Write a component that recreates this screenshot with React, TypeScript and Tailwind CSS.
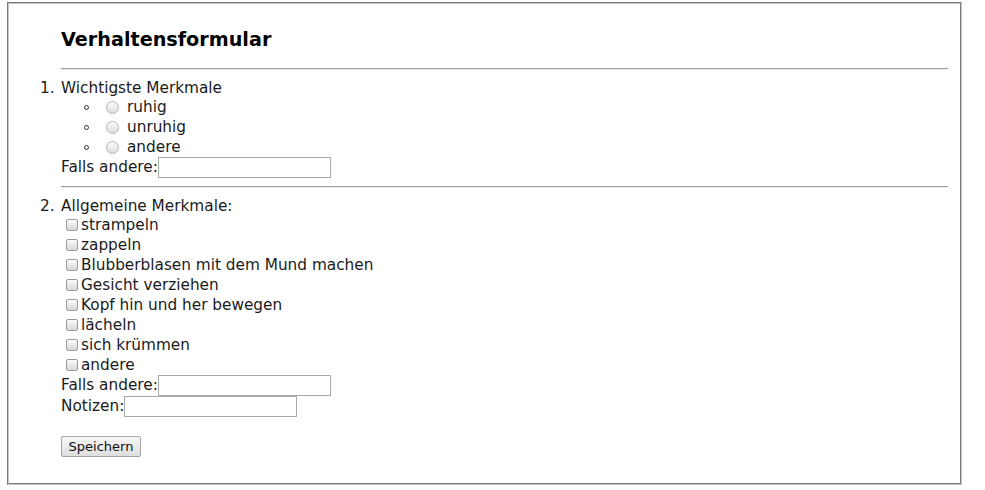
import { useState } from "react"

const font = { fontFamily: '"DejaVu Sans", Verdana, sans-serif' }

function Radio({ name }: { name: string }) {
  return (
    <input
      type="radio"
      name={name}
      className="ml-[5px] mr-[3px] h-[13px] w-[13px] shrink-0 appearance-none rounded-full border border-[#b4b4b4] bg-gradient-to-b from-[#fdfdfd] to-[#dcdcdc] checked:bg-[#666]"
    />
  )
}

function Check() {
  return (
    <input
      type="checkbox"
      className="ml-[5px] mr-[3px] h-[12px] w-[12px] shrink-0 appearance-none rounded-[2px] border border-[#9a9a9a] bg-gradient-to-b from-[#fcfcfc] to-[#d8d8d8] checked:bg-[#666]"
    />
  )
}

function TextField() {
  return <input type="text" className="h-[21px] w-[173px] border border-[#a9a9a9] bg-white px-1 text-[13px] outline-none" />
}

function Rule() {
  return <hr className="border-0 border-t border-b border-t-[#9a9a9a] border-b-[#eeeeee]" />
}

const mood = ["ruhig", "unruhig", "andere"]
const traits = [
  "strampeln",
  "zappeln",
  "Blubberblasen mit dem Mund machen",
  "Gesicht verziehen",
  "Kopf hin und her bewegen",
  "lächeln",
  "sich krümmen",
  "andere",
]

export default function App() {
  const [saved, setSaved] = useState(false)

  return (
    <div className="h-[490px] w-[985px] bg-white pl-[7px] pt-[2px] text-[15.3px] text-[#1a1a1a]" style={font}>
      <div className="h-[483px] w-[955px] border border-t-[#7a7a7a] border-l-[#7a7a7a] border-b-[#c4c4c4] border-r-[#c4c4c4]">
        <div className="h-full w-full border border-t-[#c4c4c4] border-l-[#c4c4c4] border-b-[#7a7a7a] border-r-[#7a7a7a] pl-[52px] pr-[12px] pt-[25px]">
          <h3 className="h-[22px] text-[19.2px] font-bold leading-[22px] text-black">Verhaltensformular</h3>
          <div className="pt-[17px]">
            <Rule />
          </div>

          <div className="pt-[7px]">
            <div className="relative h-5 leading-[22px]">
              <span className="absolute -left-[21px]">1.</span>
              Wichtigste Merkmale
            </div>
            <ul className="pl-[23px]">
              {mood.map((m) => (
                <li key={m} className="flex h-5 items-center leading-[22px]">
                  <span className="mr-[12px] h-[5px] w-[5px] rounded-full border border-[#333]" />
                  <Radio name="mood" />
                  <span className="pl-[5px]">{m}</span>
                </li>
              ))}
            </ul>
            <div className="flex h-[21px] items-center">
              <span>Falls andere:</span>
              <TextField />
            </div>
          </div>

          <div className="pb-[7px] pt-[8px]">
            <Rule />
          </div>

          <div>
            <div className="relative h-5 leading-[22px]">
              <span className="absolute -left-[21px]">2.</span>
              Allgemeine Merkmale:
            </div>
            {traits.map((t, i) => (
              <label key={i} className="flex h-5 items-center leading-[22px]">
                <Check />
                <span>{t}</span>
              </label>
            ))}
            <div className="flex h-[21px] items-center">
              <span>Falls andere:</span>
              <TextField />
            </div>
            <div className="flex h-[21px] items-center">
              <span>Notizen:</span>
              <TextField />
            </div>
            <div className="pt-[18px]">
              <button
                type="button"
                onClick={() => setSaved(!saved)}
                className="h-[21px] w-[80px] rounded-[2px] border border-[#a5a5a5] bg-gradient-to-b from-[#f6f6f6] to-[#dedede] text-[13px] leading-none text-[#111]"
              >
                Speichern
              </button>
            </div>
          </div>
        </div>
      </div>
    </div>
  )
}
